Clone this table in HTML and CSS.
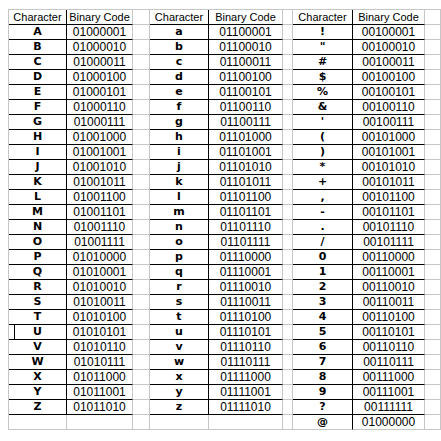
FILE: index.html
```html
<!DOCTYPE html>
<html>
<head>
<meta charset="utf-8">
<link rel="stylesheet" href="styles.css">
</head>
<body>
<table class="sheet">
<colgroup>
<col class="w-c1"><col class="w-c2"><col class="w-g1"><col class="w-c4"><col class="w-c5"><col class="w-g2"><col class="w-c7"><col class="w-c8"><col class="w-c9">
</colgroup>
<tbody>
<tr><td class="k hd">Character</td><td class="v hd">Binary Code</td><td></td><td class="k hd">Character</td><td class="v hd">Binary Code</td><td></td><td class="k hd">Character</td><td class="v hd">Binary Code</td><td></td></tr>
<tr><td class="k">A</td><td class="v">01000001</td><td></td><td class="k">a</td><td class="v">01100001</td><td></td><td class="k">!</td><td class="v">00100001</td><td></td></tr>
<tr><td class="k">B</td><td class="v">01000010</td><td></td><td class="k">b</td><td class="v">01100010</td><td></td><td class="k">"</td><td class="v">00100010</td><td></td></tr>
<tr><td class="k">C</td><td class="v">01000011</td><td></td><td class="k">c</td><td class="v">01100011</td><td></td><td class="k">#</td><td class="v">00100011</td><td></td></tr>
<tr><td class="k">D</td><td class="v">01000100</td><td></td><td class="k">d</td><td class="v">01100100</td><td></td><td class="k">$</td><td class="v">00100100</td><td></td></tr>
<tr><td class="k">E</td><td class="v">01000101</td><td></td><td class="k">e</td><td class="v">01100101</td><td></td><td class="k">%</td><td class="v">00100101</td><td></td></tr>
<tr><td class="k">F</td><td class="v">01000110</td><td></td><td class="k">f</td><td class="v">01100110</td><td></td><td class="k">&amp;</td><td class="v">00100110</td><td></td></tr>
<tr><td class="k">G</td><td class="v">01000111</td><td></td><td class="k">g</td><td class="v">01100111</td><td></td><td class="k">'</td><td class="v">00100111</td><td></td></tr>
<tr><td class="k">H</td><td class="v">01001000</td><td></td><td class="k">h</td><td class="v">01101000</td><td></td><td class="k">(</td><td class="v">00101000</td><td></td></tr>
<tr><td class="k">I</td><td class="v">01001001</td><td></td><td class="k">i</td><td class="v">01101001</td><td></td><td class="k">)</td><td class="v">00101001</td><td></td></tr>
<tr><td class="k">J</td><td class="v">01001010</td><td></td><td class="k">j</td><td class="v">01101010</td><td></td><td class="k">*</td><td class="v">00101010</td><td></td></tr>
<tr><td class="k">K</td><td class="v">01001011</td><td></td><td class="k">k</td><td class="v">01101011</td><td></td><td class="k">+</td><td class="v">00101011</td><td></td></tr>
<tr><td class="k">L</td><td class="v">01001100</td><td></td><td class="k">l</td><td class="v">01101100</td><td></td><td class="k">,</td><td class="v">00101100</td><td></td></tr>
<tr><td class="k">M</td><td class="v">01001101</td><td></td><td class="k">m</td><td class="v">01101101</td><td></td><td class="k">-</td><td class="v">00101101</td><td></td></tr>
<tr><td class="k">N</td><td class="v">01001110</td><td></td><td class="k">n</td><td class="v">01101110</td><td></td><td class="k">.</td><td class="v">00101110</td><td></td></tr>
<tr><td class="k">O</td><td class="v">01001111</td><td></td><td class="k">o</td><td class="v">01101111</td><td></td><td class="k">/</td><td class="v">00101111</td><td></td></tr>
<tr><td class="k">P</td><td class="v">01010000</td><td></td><td class="k">p</td><td class="v">01110000</td><td></td><td class="k">0</td><td class="v">00110000</td><td></td></tr>
<tr><td class="k">Q</td><td class="v">01010001</td><td></td><td class="k">q</td><td class="v">01110001</td><td></td><td class="k">1</td><td class="v">00110001</td><td></td></tr>
<tr><td class="k">R</td><td class="v">01010010</td><td></td><td class="k">r</td><td class="v">01110010</td><td></td><td class="k">2</td><td class="v">00110010</td><td></td></tr>
<tr><td class="k">S</td><td class="v">01010011</td><td></td><td class="k">s</td><td class="v">01110011</td><td></td><td class="k">3</td><td class="v">00110011</td><td></td></tr>
<tr><td class="k">T</td><td class="v">01010100</td><td></td><td class="k">t</td><td class="v">01110100</td><td></td><td class="k">4</td><td class="v">00110100</td><td></td></tr>
<tr><td class="k cur">U</td><td class="v">01010101</td><td></td><td class="k">u</td><td class="v">01110101</td><td></td><td class="k">5</td><td class="v">00110101</td><td></td></tr>
<tr><td class="k">V</td><td class="v">01010110</td><td></td><td class="k">v</td><td class="v">01110110</td><td></td><td class="k">6</td><td class="v">00110110</td><td></td></tr>
<tr><td class="k">W</td><td class="v">01010111</td><td></td><td class="k">w</td><td class="v">01110111</td><td></td><td class="k">7</td><td class="v">00110111</td><td></td></tr>
<tr><td class="k">X</td><td class="v">01011000</td><td></td><td class="k">x</td><td class="v">01111000</td><td></td><td class="k">8</td><td class="v">00111000</td><td></td></tr>
<tr><td class="k">Y</td><td class="v">01011001</td><td></td><td class="k">y</td><td class="v">01111001</td><td></td><td class="k">9</td><td class="v">00111001</td><td></td></tr>
<tr><td class="k">Z</td><td class="v">01011010</td><td></td><td class="k">z</td><td class="v">01111010</td><td></td><td class="k">?</td><td class="v">00111111</td><td></td></tr>
<tr><td></td><td></td><td></td><td></td><td></td><td></td><td class="k open">@</td><td class="v open">01000000</td><td></td></tr>
</tbody>
</table>
</body>
</html>
```

FILE: styles.css
```css
html, body {
  margin: 0;
  padding: 0;
  background: #ffffff;
  overflow: hidden;
}

.sheet {
  margin: 9px 0 0 8px;
  border-collapse: separate;
  border-spacing: 0;
  table-layout: fixed;
  width: 433px;
  border-top: 1px solid #c6c6c6;
  border-left: 1px solid #c6c6c6;
  font-family: "Liberation Sans", Arial, sans-serif;
  color: #000;
}

.w-c1 { width: 58px; }
.w-c2 { width: 66px; }
.w-g1 { width: 17px; }
.w-c4 { width: 59px; }
.w-c5 { width: 74px; }
.w-g2 { width: 10px; }
.w-c7 { width: 60px; }
.w-c8 { width: 72px; }
.w-c9 { width: 16px; }

.sheet td {
  height: 14px;
  padding: 0;
  line-height: 14px;
  border-right: 1px solid #c6c6c6;
  border-bottom: 1px solid #c6c6c6;
  text-align: center;
  white-space: nowrap;
  overflow: hidden;
  font-size: 12px;
}

.sheet td.hd {
  font-size: 11px;
}

.sheet td.k {
  border-right-color: #000;
  border-bottom-color: #000;
  font-family: "DejaVu Sans", Verdana, sans-serif;
  font-weight: bold;
  font-size: 11px;
}

.sheet td.k.hd {
  font-family: "Liberation Sans", Arial, sans-serif;
  font-weight: normal;
}

.sheet td.v {
  border-bottom-color: #000;
}

.sheet td.open {
  border-bottom-color: #c6c6c6;
}

.sheet td.cur {
  position: relative;
}

.sheet td.cur::before {
  content: "";
  position: absolute;
  left: 5px;
  top: -1px;
  bottom: -1px;
  width: 1px;
  background: #000;
}
```
